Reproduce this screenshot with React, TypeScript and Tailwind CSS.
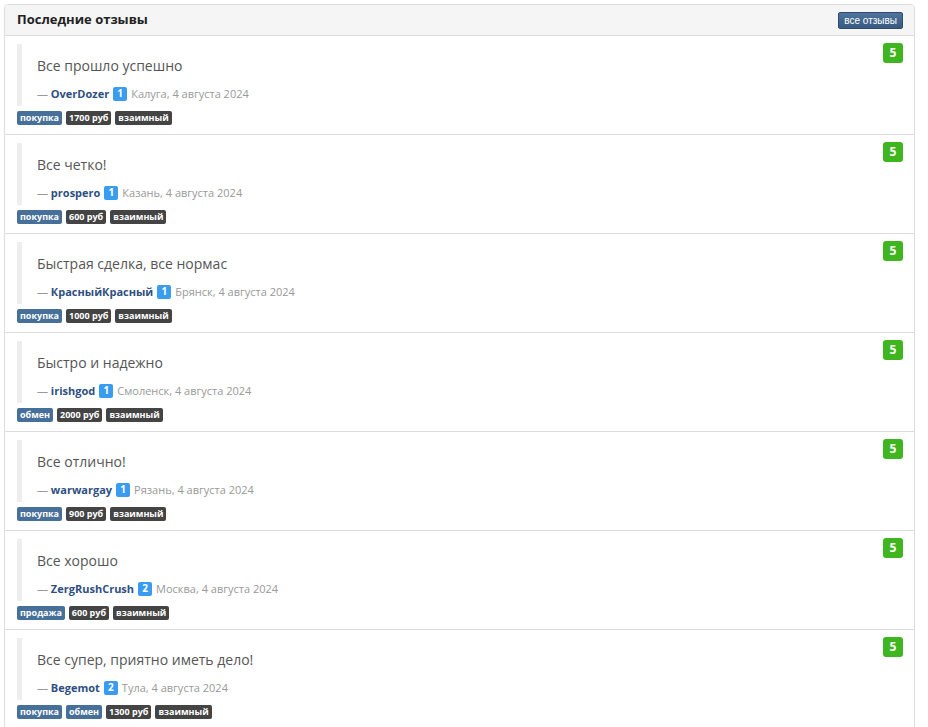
import React from "react";

type Review = {
  text: string;
  name: string;
  count: number;
  city: string;
  tags: { label: string; kind: "blue" | "dark" }[];
};

const reviews: Review[] = [
  { text: "Все прошло успешно", name: "OverDozer", count: 1, city: "Калуга", tags: [{ label: "покупка", kind: "blue" }, { label: "1700 руб", kind: "dark" }, { label: "взаимный", kind: "dark" }] },
  { text: "Все четко!", name: "prospero", count: 1, city: "Казань", tags: [{ label: "покупка", kind: "blue" }, { label: "600 руб", kind: "dark" }, { label: "взаимный", kind: "dark" }] },
  { text: "Быстрая сделка, все нормас", name: "КрасныйКрасный", count: 1, city: "Брянск", tags: [{ label: "покупка", kind: "blue" }, { label: "1000 руб", kind: "dark" }, { label: "взаимный", kind: "dark" }] },
  { text: "Быстро и надежно", name: "irishgod", count: 1, city: "Смоленск", tags: [{ label: "обмен", kind: "blue" }, { label: "2000 руб", kind: "dark" }, { label: "взаимный", kind: "dark" }] },
  { text: "Все отлично!", name: "warwargay", count: 1, city: "Рязань", tags: [{ label: "покупка", kind: "blue" }, { label: "900 руб", kind: "dark" }, { label: "взаимный", kind: "dark" }] },
  { text: "Все хорошо", name: "ZergRushCrush", count: 2, city: "Москва", tags: [{ label: "продажа", kind: "blue" }, { label: "600 руб", kind: "dark" }, { label: "взаимный", kind: "dark" }] },
  { text: "Все супер, приятно иметь дело!", name: "Begemot", count: 2, city: "Тула", tags: [{ label: "покупка", kind: "blue" }, { label: "обмен", kind: "blue" }, { label: "1300 руб", kind: "dark" }, { label: "взаимный", kind: "dark" }] },
];

export default function App() {
  return (
    <div className="min-h-[727px] bg-white pt-[4px] pl-[4px] w-[928px] overflow-hidden" style={{ fontFamily: '"Open Sans", sans-serif' }}>
      <div className="w-[911px] border border-[#dddddd] rounded-[4px] bg-white">
        <div className="h-[31px] bg-[#f5f5f5] border-b border-[#dddddd] rounded-t-[4px] flex items-center justify-between pl-[12px] pr-[11px]">
          <div className="text-[13px] font-bold text-[#222]">Последние отзывы</div>
          <div
            className="h-[17px] px-[5px] flex items-center rounded-[2px] border border-[#2f4d70] bg-gradient-to-b from-[#4f739c] to-[#385a82] text-white text-[10px]"
            style={{ fontFamily: '"Liberation Sans", Arial, sans-serif' }}
          >
            все отзывы
          </div>
        </div>
        {reviews.map((r, i) => (
          <div key={i} className="flex justify-between items-start pl-[12px] pr-[11px] pt-[8px] pb-[9px] border-b border-[#dddddd]">
            <div>
              <div className="border-l-[5px] border-[#eeeeee] pl-[15px] pt-[12px] pb-[4px]">
                <div className="text-[14px] leading-[20px] text-[#555]">{r.text}</div>
                <div className="mt-[9px] text-[11px] leading-[17px] text-[#999] flex items-center">
                  <span>—&nbsp;</span>
                  <span className="font-bold text-[#2d4f7f]">{r.name}</span>
                  <span className="ml-[4px] mr-[4px] w-[14px] h-[14px] rounded-[2px] bg-[#3a9cf0] text-white text-[10px] font-bold flex items-center justify-center">
                    {r.count}
                  </span>
                  <span>{r.city}, 4 августа 2024</span>
                </div>
              </div>
              <div className="mt-[5px] flex gap-[4px]">
                {r.tags.map((t, j) => (
                  <span
                    key={j}
                    className={
                      "h-[14px] px-[3px] rounded-[2px] text-white text-[9px] font-bold leading-[14px] " +
                      (t.kind === "blue" ? "bg-[#466f99]" : "bg-[#444444]")
                    }
                  >
                    {t.label}
                  </span>
                ))}
              </div>
            </div>
            <div className="mt-[-1px] w-[20px] h-[20px] rounded-[3px] bg-[#3fb61f] text-white text-[12px] font-bold flex items-center justify-center">
              5
            </div>
          </div>
        ))}
      </div>
    </div>
  );
}
